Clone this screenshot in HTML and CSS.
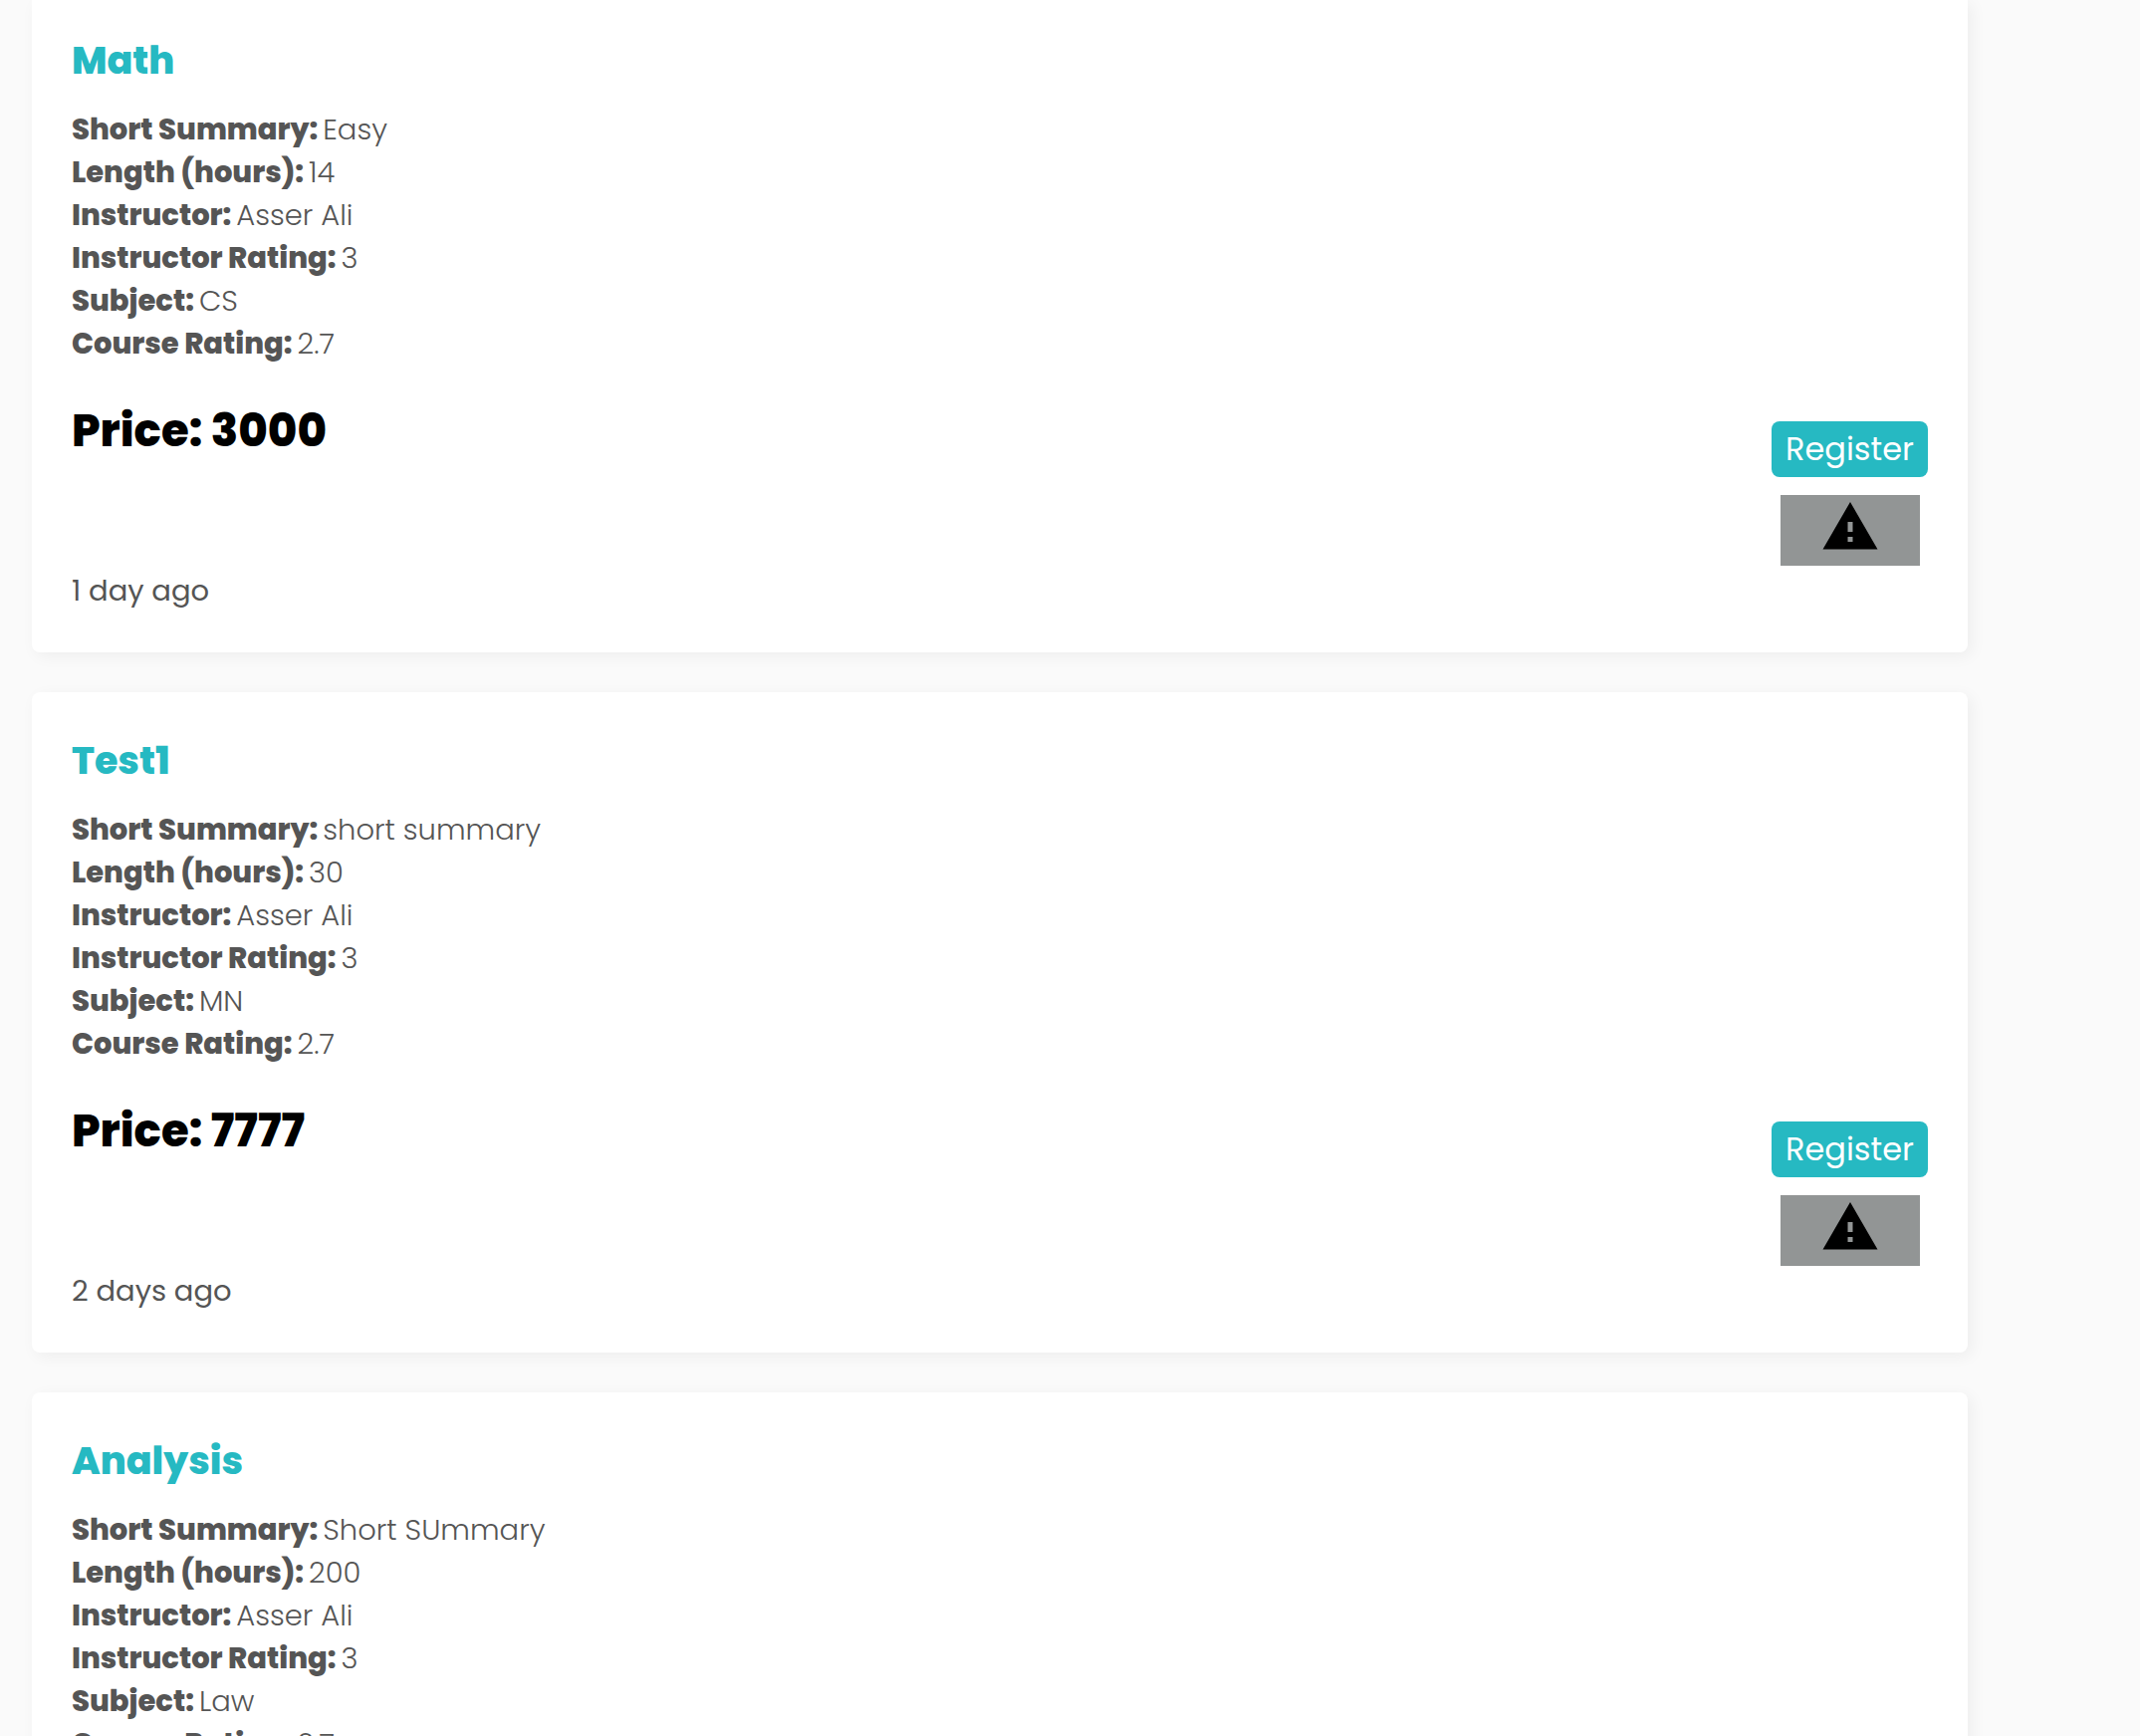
FILE: index.html
```html
<!DOCTYPE html>
<html lang="en">
<head>
<meta charset="utf-8">
<meta name="viewport" content="width=device-width, initial-scale=1">
<title>Courses</title>
<link rel="stylesheet" href="styles.css">
</head>
<body>
<main class="course-list">
  <article class="course">
    <h2 class="course-title">Math</h2>
    <dl class="details">
      <div class="detail"><dt>Short Summary:</dt><dd>Easy</dd></div>
      <div class="detail"><dt>Length (hours):</dt><dd>14</dd></div>
      <div class="detail"><dt>Instructor:</dt><dd>Asser Ali</dd></div>
      <div class="detail"><dt>Instructor Rating:</dt><dd>3</dd></div>
      <div class="detail"><dt>Subject:</dt><dd>CS</dd></div>
      <div class="detail"><dt>Course Rating:</dt><dd>2.7</dd></div>
    </dl>
    <div class="course-footer">
      <div class="meta">
        <p class="price">Price: 3000</p>
        <time class="posted">1 day ago</time>
      </div>
      <div class="actions">
        <button class="register" type="button">Register</button>
        <button class="report" type="button" aria-label="Report">
          <svg class="report-icon" viewBox="0 0 24 24" aria-hidden="true"><path d="M1 21h22L12 2 1 21zm12-3h-2v-2h2v2zm0-4h-2v-4h2v4z"/></svg>
        </button>
      </div>
    </div>
  </article>

  <article class="course">
    <h2 class="course-title">Test1</h2>
    <dl class="details">
      <div class="detail"><dt>Short Summary:</dt><dd>short summary</dd></div>
      <div class="detail"><dt>Length (hours):</dt><dd>30</dd></div>
      <div class="detail"><dt>Instructor:</dt><dd>Asser Ali</dd></div>
      <div class="detail"><dt>Instructor Rating:</dt><dd>3</dd></div>
      <div class="detail"><dt>Subject:</dt><dd>MN</dd></div>
      <div class="detail"><dt>Course Rating:</dt><dd>2.7</dd></div>
    </dl>
    <div class="course-footer">
      <div class="meta">
        <p class="price">Price: 7777</p>
        <time class="posted">2 days ago</time>
      </div>
      <div class="actions">
        <button class="register" type="button">Register</button>
        <button class="report" type="button" aria-label="Report">
          <svg class="report-icon" viewBox="0 0 24 24" aria-hidden="true"><path d="M1 21h22L12 2 1 21zm12-3h-2v-2h2v2zm0-4h-2v-4h2v4z"/></svg>
        </button>
      </div>
    </div>
  </article>

  <article class="course">
    <h2 class="course-title">Analysis</h2>
    <dl class="details">
      <div class="detail"><dt>Short Summary:</dt><dd>Short SUmmary</dd></div>
      <div class="detail"><dt>Length (hours):</dt><dd>200</dd></div>
      <div class="detail"><dt>Instructor:</dt><dd>Asser Ali</dd></div>
      <div class="detail"><dt>Instructor Rating:</dt><dd>3</dd></div>
      <div class="detail"><dt>Subject:</dt><dd>Law</dd></div>
      <div class="detail"><dt>Course Rating:</dt><dd>2.7</dd></div>
    </dl>
  </article>
</main>
</body>
</html>
```

FILE: styles.css
```css
* {
  box-sizing: border-box;
}

body {
  margin: 0;
  height: 100vh;
  overflow: hidden;
  background: #fafafa;
  color: #555;
  font-family: Poppins, Inter, "Open Sans", sans-serif;
  font-size: 29px;
  line-height: 43px;
}

.course-list {
  display: flex;
  flex-direction: column;
  gap: 40px;
  padding: 0 173px 0 32px;
}

.course {
  padding: 40px;
  border-radius: 8px;
  background: #fff;
  box-shadow: 4px 4px 16px rgba(0, 0, 0, 0.05);
}

.course:first-child {
  padding-top: 32px;
  border-top-left-radius: 0;
  border-top-right-radius: 0;
}

.course-title {
  margin: 0 0 19px;
  color: #26b9c2;
  font-size: 38px;
  font-weight: 800;
  line-height: 58px;
}

.details {
  margin: 0 0 32px;
}

.detail {
  display: flex;
  gap: 5px;
}

.detail dt {
  font-weight: 800;
}

.detail dd {
  margin: 0;
  font-weight: 300;
}

.course-footer {
  display: flex;
  justify-content: space-between;
}

.meta {
  display: flex;
  flex-direction: column;
  justify-content: space-between;
}

.price {
  margin: 0;
  color: #000;
  font-size: 45px;
  font-weight: 800;
  line-height: 68px;
}

.actions {
  display: flex;
  flex-direction: column;
  align-items: center;
  gap: 18px;
  padding: 24px 0 47px;
}

.register {
  height: 56px;
  padding: 0 14px 2px;
  border: 0;
  border-radius: 8px;
  background: #26b9c2;
  color: #fff;
  font: inherit;
  font-size: 32px;
}

.report {
  display: flex;
  justify-content: center;
  width: 140px;
  height: 71px;
  padding: 2px 0 0;
  border: 0;
  background: #929595;
}

.report-icon {
  width: 60px;
  height: 60px;
}
```
